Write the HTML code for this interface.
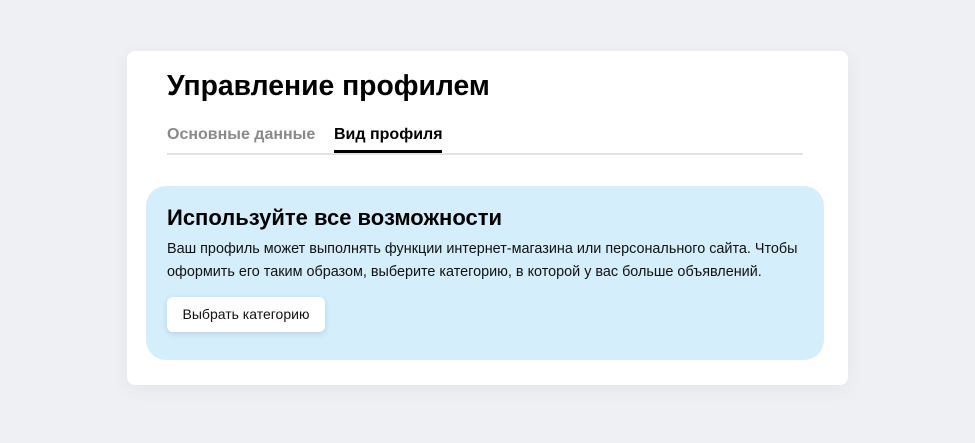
<!DOCTYPE html>
<html><head><meta charset="utf-8"><style>
html,body{margin:0;padding:0;}
body{width:975px;height:443px;background:#eff0f3;font-family:"Liberation Sans",Arial,sans-serif;position:relative;overflow:hidden;}
.card{position:absolute;left:127px;top:51px;width:721px;height:334px;background:#fff;border-radius:8px;box-shadow:0 4px 20px rgba(0,0,0,0.05);}
h1{position:absolute;left:40px;top:17px;margin:0;font-size:28.3px;font-weight:bold;color:#000;line-height:34px;white-space:nowrap;}
.tabs{position:absolute;left:40px;top:70px;width:636px;height:32px;border-bottom:2px solid #e4e4e4;}
.tab{position:absolute;top:4px;font-size:16px;font-weight:bold;line-height:20px;white-space:nowrap;}
.t1{left:0;color:#8a8a8a;}
.t2{left:167px;color:#000;height:25px;border-bottom:3px solid #000;width:108px;}
.box{position:absolute;left:19px;top:135px;width:678px;height:174px;background:#d4eefc;border-radius:20px;}
h2{position:absolute;left:21px;top:19px;margin:0;font-size:22px;font-weight:bold;line-height:26px;color:#000;white-space:nowrap;}
p{position:absolute;left:21px;top:52px;margin:0;font-size:14.4px;line-height:23px;color:#111;width:650px;}
.btn{position:absolute;left:21px;top:111px;width:158px;height:35px;background:#fff;border-radius:6px;box-shadow:0 2px 6px rgba(0,60,120,0.15);font-size:14px;line-height:35px;text-align:center;color:#111;}
</style></head><body>
<div class="card">
<h1>Управление профилем</h1>
<div class="tabs"><span class="tab t1">Основные данные</span><span class="tab t2">Вид профиля</span></div>
<div class="box">
<h2>Используйте все возможности</h2>
<p>Ваш профиль может выполнять функции интернет-магазина или персонального сайта. Чтобы оформить его таким образом, выберите категорию, в которой у вас больше объявлений.</p>
<div class="btn">Выбрать категорию</div>
</div>
</div>
</body></html>
